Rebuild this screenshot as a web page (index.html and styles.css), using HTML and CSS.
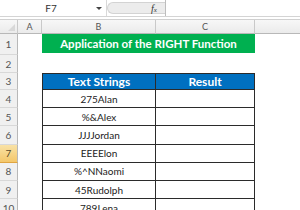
FILE: index.html
```html
<!DOCTYPE html>
<html>
  <head>
    <title>RIGHT Function</title>
    <link rel="stylesheet" href="styles.css">
  </head>
  <body>
    <div class="formula-bar">
      <div class="name-box">
        <span class="cell-ref">F7</span>
        <span class="arrow"></span>
      </div>
      <div class="bar-tools">
        <span class="fx">f<small>x</small></span>
      </div>
      <div class="formula-input"></div>
    </div>

    <div class="sheet">
      <div class="corner"><span class="corner-mark"></span></div>
      <div class="col-head">A</div>
      <div class="col-head">B</div>
      <div class="col-head">C</div>
      <div class="col-head last"></div>

      <div class="row-head">1</div>
      <div class="cell"></div>
      <div class="cell title">Application of the RIGHT Function</div>
      <div class="cell"></div>

      <div class="row-head">2</div>
      <div class="cell"></div>
      <div class="cell"></div>
      <div class="cell"></div>
      <div class="cell"></div>

      <div class="row-head">3</div>
      <div class="cell"></div>
      <div class="cell t th first">Text Strings</div>
      <div class="cell t th">Result</div>
      <div class="cell"></div>

      <div class="row-head">4</div>
      <div class="cell"></div>
      <div class="cell t first">275Alan</div>
      <div class="cell t"></div>
      <div class="cell"></div>

      <div class="row-head">5</div>
      <div class="cell"></div>
      <div class="cell t first">%&amp;Alex</div>
      <div class="cell t"></div>
      <div class="cell"></div>

      <div class="row-head">6</div>
      <div class="cell"></div>
      <div class="cell t first">JJJJordan</div>
      <div class="cell t"></div>
      <div class="cell"></div>

      <div class="row-head active">7</div>
      <div class="cell"></div>
      <div class="cell t first">EEEElon</div>
      <div class="cell t"></div>
      <div class="cell"></div>

      <div class="row-head">8</div>
      <div class="cell"></div>
      <div class="cell t first">%^NNaomi</div>
      <div class="cell t"></div>
      <div class="cell"></div>

      <div class="row-head">9</div>
      <div class="cell"></div>
      <div class="cell t first">45Rudolph</div>
      <div class="cell t"></div>
      <div class="cell"></div>

      <div class="row-head">10</div>
      <div class="cell"></div>
      <div class="cell t first">789Lena</div>
      <div class="cell t"></div>
      <div class="cell"></div>
    </div>
  </body>
</html>
```

FILE: styles.css
```css
:root {
  --head-bg: #f0f0f0;
  --head-line: #c9c9c9;
  --head-text: #555555;
  --green: #00b050;
  --blue: #0070c0;
  --table-line: #2b2b2b;
}

body {
  margin: 0;
  width: 300px;
  height: 210px;
  overflow: hidden;
  background-color: #ffffff;
  font-family: Lato, "Open Sans", sans-serif;
}

/* formula bar */

.formula-bar {
  display: flex;
  height: 16px;
  border-bottom: 1px solid #d4d4d4;
  margin-bottom: 2px;
  background-color: #ffffff;
}

.name-box {
  display: flex;
  align-items: center;
  width: 106px;
  border-right: 1px solid #d9d9d9;
  font-size: 10px;
  color: #333;
}

.cell-ref {
  flex: 1;
  text-align: center;
  padding-left: 6px;
}

.arrow {
  width: 0;
  height: 0;
  margin-right: 4px;
  border-left: 3px solid transparent;
  border-right: 3px solid transparent;
  border-top: 3px solid #444;
}

.bar-tools {
  display: flex;
  align-items: center;
  justify-content: flex-end;
  width: 57px;
  margin: 2px 0;
  background-color: #ececec;
  border: 1px solid #d3d3d3;
  border-right: none;
  border-radius: 6px 0 0 6px;
}

.fx {
  width: 14px;
  font-family: "Liberation Serif", serif;
  font-style: italic;
  font-size: 10px;
  color: #333;
}

.fx small {
  font-size: 7px;
}

.formula-input {
  flex: 1;
  border-left: 1px solid #bdbdbd;
}

/* sheet */

.sheet {
  display: grid;
  grid-template-columns: 18px 24px 114px 99px 1fr;
  grid-template-rows: 14px 21px 18px 17px repeat(7, 18.2px);
  border-top: 1px solid #d0d0d0;
}

.corner,
.col-head,
.row-head {
  display: flex;
  align-items: center;
  justify-content: center;
  background: linear-gradient(#f7f7f7, #ebebeb);
  color: var(--head-text);
  font-size: 9px;
  box-sizing: border-box;
}

.corner {
  position: relative;
  border-right: 1px solid var(--head-line);
  border-bottom: 1px solid #b8b8b8;
}

.corner-mark {
  position: absolute;
  right: 2px;
  bottom: 2px;
  width: 0;
  height: 0;
  border-left: 7px solid transparent;
  border-bottom: 7px solid #d8d8d8;
}

.col-head {
  border-right: 1px solid var(--head-line);
  border-bottom: 1px solid #b8b8b8;
}

.col-head.last {
  border-right: none;
}

.row-head {
  background: var(--head-bg);
  border-right: 1px solid #b8b8b8;
  border-bottom: 1px solid #d8d8d8;
  font-size: 10px;
}

.row-head.active {
  background: linear-gradient(#f9e2a6, #f4c76a);
  border-bottom: 1px solid #e0a541;
  color: #5a4a2a;
}

.cell {
  display: flex;
  align-items: center;
  justify-content: center;
  box-sizing: border-box;
  font-size: 10px;
  color: #222;
}

.title {
  grid-column: span 2;
  margin: 0 0 2px;
  background-color: var(--green);
  color: #ffffff;
  font-weight: bold;
  font-size: 11.5px;
}

.t {
  border-right: 1px solid var(--table-line);
  border-bottom: 1px solid var(--table-line);
}

.t.first {
  border-left: 1px solid var(--table-line);
}

.th {
  border-top: 1px solid var(--table-line);
  background-color: var(--blue);
  color: #ffffff;
  font-weight: bold;
  font-size: 12px;
}
```
